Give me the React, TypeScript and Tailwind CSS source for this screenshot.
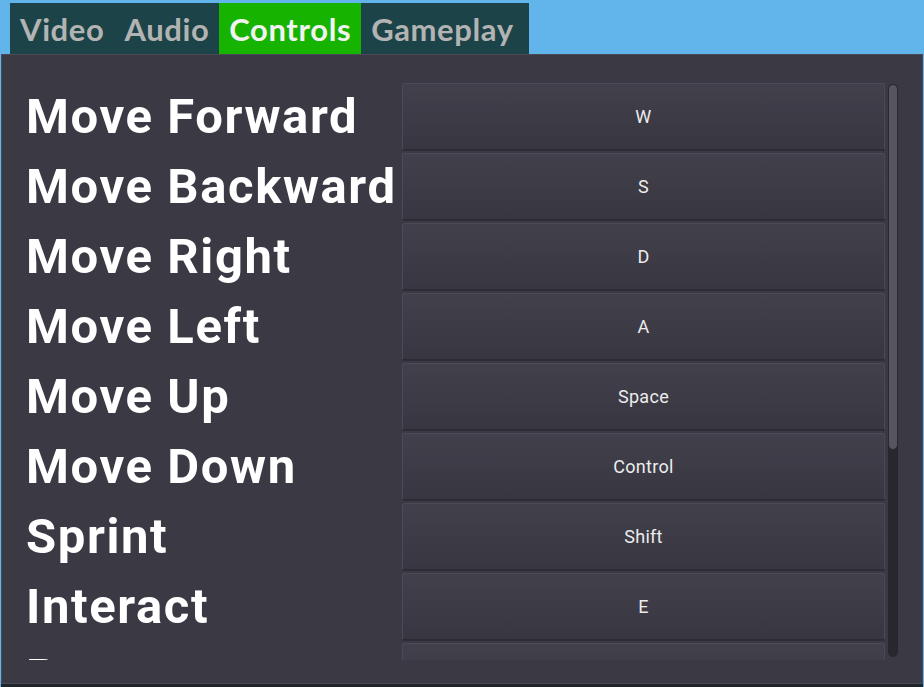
import React from "react";

const tabs = ["Video", "Audio", "Controls", "Gameplay"];

const bindings: [string, string][] = [
  ["Move Forward", "W"],
  ["Move Backward", "S"],
  ["Move Right", "D"],
  ["Move Left", "A"],
  ["Move Up", "Space"],
  ["Move Down", "Control"],
  ["Sprint", "Shift"],
  ["Interact", "E"],
  ["Pause", "Escape"],
];

const labelFont = { fontFamily: "Roboto, 'DejaVu Sans', sans-serif" };
const tabFont = { fontFamily: "Lato, 'Open Sans', sans-serif" };

export default function App() {
  return (
    <div className="w-[924px] h-[687px] overflow-hidden bg-[#61b5ea] relative">
      {/* tab strip */}
      <div className="ml-[10px] mt-[3px] flex h-[51px] w-[519px] bg-[#1c4448]" style={tabFont}>
        {tabs.map((t) => (
          <div
            key={t}
            className={
              t === "Controls"
                ? "flex items-center justify-center pt-[2px] px-[10px] bg-[#16b401] text-[#f2f2f2] text-[31px] font-bold leading-none tracking-[0.6px]"
                : "flex items-center justify-center pt-[2px] px-[10px] text-[#b3b3b3] text-[31px] font-bold leading-none tracking-[0.6px]"
            }
          >
            {t}
          </div>
        ))}
      </div>

      {/* settings panel */}
      <div className="ml-[1px] w-[922px] h-[630px] bg-[#3b3944] border border-[#4b4955] shadow-[0_3px_0_#1f2429] pt-[28px] pl-[24px]">
        <div className="flex h-[577px] overflow-hidden">
          <div className="flex flex-col gap-[3px] w-[859px] shrink-0">
            {bindings.map(([action, key]) => (
              <div key={action} className="flex h-[67px] shrink-0 items-center">
                <div
                  className="w-[376px] text-white text-[49px] font-bold leading-none tracking-[1.6px]"
                  style={labelFont}
                >
                  {action}
                </div>
                <div
                  className="flex h-[67px] w-[483px] items-center justify-center rounded-[2px] border border-[#4c4a56] border-b-[#2c2b33] bg-gradient-to-b from-[#42404b] to-[#383641] text-[18px] font-normal tracking-[0.3px] text-[#ececec] shadow-[0_1px_0_#2f2e36]"
                  style={labelFont}
                >
                  {key}
                </div>
              </div>
            ))}
          </div>
          {/* scrollbar */}
          <div className="ml-[3px] mt-[1px] h-[573px] w-[10px] rounded-[5px] bg-[#28272d] overflow-hidden">
            <div className="h-[366px] w-[10px] rounded-[5px] bg-[#57555f] border border-[#2a2930]" />
          </div>
        </div>
      </div>
    </div>
  );
}
